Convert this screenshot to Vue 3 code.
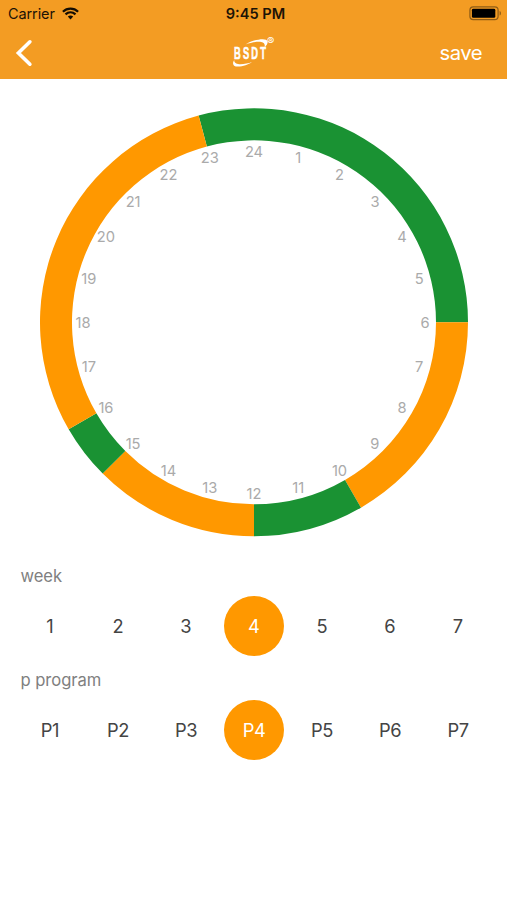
<template>
  <div class="screen">
    <header class="header">
      <div class="status-bar">
        <div class="carrier">
          <span class="carrier-name">Carrier</span>
          <svg class="wifi" width="17" height="13" viewBox="0 0 17 13">
            <path d="M0.9 4.7C5.2 0.5 11.8 0.5 16.1 4.7" />
            <path d="M3.5 7.4C6.4 4.7 10.6 4.7 13.5 7.4" />
            <path class="wifi-dot" d="M5.8 9.6C7.4 8.2 9.6 8.2 11.2 9.6L8.5 12.4Z" />
          </svg>
        </div>
        <span class="time">9:45 PM</span>
        <svg class="battery" width="33" height="15" viewBox="0 0 33 15">
          <rect class="battery-shell" x="0.9" y="0.9" width="28.2" height="12.8" rx="3.4" />
          <rect x="2.9" y="2.8" width="23.4" height="9" rx="1.4" />
          <path class="battery-cap" d="M30.6 5C32.4 5.7 32.4 8.9 30.6 9.6Z" />
        </svg>
      </div>
      <div class="nav-bar">
        <button class="back" aria-label="Back">
          <svg width="18" height="28" viewBox="0 0 18 28">
            <path d="M14.9 2.8L3.4 14L14.9 25.2" />
          </svg>
        </button>
        <svg class="logo" width="55" height="41" viewBox="-4 -4 55 41">
          <path d="M15.5 8.4C23 3.6 36.6 1 37.6 5.4C38 7.4 36.6 9.6 34.6 11.4C35.2 8.6 34.4 6.6 31.2 6C27.2 5.4 20.6 6.6 15.5 8.4Z" />
          <path d="M4.2 24C2.2 27 2.6 30.4 7.4 30.6C12.4 30.8 18.4 28.6 22 26C17.6 27.6 11.6 28.8 8 28C5.2 27.4 4 26.2 4.2 24Z" />
          <text class="logo-name" transform="translate(4 23.3) scale(0.55 1)">BSDT</text>
          <text class="logo-mark" x="37" y="9.4">®</text>
        </svg>
        <button class="save">save</button>
      </div>
    </header>

    <svg class="dial" width="428" height="429" viewBox="-214 -214.3 428 429">
      <path
        v-for="segment in segments"
        :key="segment.from"
        :class="segment.type"
        :d="arcPath(segment.from, segment.to)"
      />
      <text
        v-for="hour in hours"
        :key="hour.value"
        class="hour"
        :x="hour.x"
        :y="hour.y + 5.5"
      >{{ hour.value }}</text>
    </svg>

    <section class="picker">
      <h2 class="picker-title">week</h2>
      <div class="options">
        <button
          v-for="day in 7"
          :key="day"
          class="option"
          :class="{ active: day === selectedDay }"
          @click="selectedDay = day"
        >{{ day }}</button>
      </div>
    </section>

    <section class="picker">
      <h2 class="picker-title">p program</h2>
      <div class="options">
        <button
          v-for="program in 7"
          :key="program"
          class="option program"
          :class="{ active: program === selectedProgram }"
          @click="selectedProgram = program"
        >P{{ program }}</button>
      </div>
    </section>
  </div>
</template>

<script setup>
import { ref } from "vue";

const OUTER = 214;
const INNER = 182;
const LABELS = 171;

const selectedDay = ref(4);
const selectedProgram = ref(4);

const segments = ref([
  { from: -1, to: 6, type: "on" },
  { from: 6, to: 10, type: "off" },
  { from: 10, to: 12, type: "on" },
  { from: 12, to: 15, type: "off" },
  { from: 15, to: 16, type: "on" },
  { from: 16, to: 23, type: "off" },
]);

// 24 sits at the top of the dial, hours go clockwise
const point = (hour, radius) => {
  const angle = (hour / 24) * Math.PI * 2;
  return {
    x: Math.round(Math.sin(angle) * radius * 100) / 100,
    y: Math.round(-Math.cos(angle) * radius * 100) / 100,
  };
};

const arcPath = (from, to) => {
  const a = point(from, OUTER);
  const b = point(to, OUTER);
  const c = point(to, INNER);
  const d = point(from, INNER);
  return `M${a.x} ${a.y}A${OUTER} ${OUTER} 0 0 1 ${b.x} ${b.y}L${c.x} ${c.y}A${INNER} ${INNER} 0 0 0 ${d.x} ${d.y}Z`;
};

const hours = Array.from({ length: 24 }, (_, i) => ({
  value: i + 1,
  ...point(i + 1, LABELS),
}));
</script>

<style>
body {
  margin: 0;
  background: #fff;
}
</style>

<style scoped>
.screen {
  display: flex;
  flex-direction: column;
  width: 507px;
  height: 900px;
  overflow: hidden;
  background: #fff;
  font-family: Inter, "Liberation Sans", sans-serif;
}

button {
  margin: 0;
  padding: 0;
  border: 0;
  background: none;
  font-family: inherit;
  cursor: pointer;
}

.header {
  height: 79px;
  background: #f39c23;
}

.status-bar {
  display: grid;
  grid-template-columns: 1fr auto 1fr;
  align-items: center;
  height: 27px;
  padding: 0 5px 0 8px;
  color: #1c1306;
}

.carrier {
  display: flex;
  align-items: center;
  gap: 7px;
}

.carrier-name {
  font-size: 14.5px;
  letter-spacing: -0.1px;
}

.wifi {
  fill: none;
  stroke: #140d02;
  stroke-width: 2.2;
}

.wifi-dot {
  fill: #140d02;
  stroke: none;
}

.time {
  margin-left: 1px;
  font-size: 14.6px;
  font-weight: 600;
}

.battery {
  justify-self: end;
}

.battery-shell {
  fill: none;
  stroke: #8e5c16;
  stroke-width: 1.2;
}

.battery-cap {
  fill: #8e5c16;
}

.nav-bar {
  display: grid;
  grid-template-columns: 1fr auto 1fr;
  align-items: center;
  height: 51px;
}

.back {
  justify-self: start;
  height: 28px;
  margin-left: 15px;
}

.back path {
  fill: none;
  stroke: #fff;
  stroke-width: 3.6;
  stroke-linecap: round;
  stroke-linejoin: miter;
}

.logo {
  overflow: visible;
  fill: #fff;
}

.logo-name {
  font-family: "Liberation Sans", sans-serif;
  font-size: 17px;
  font-weight: 700;
  letter-spacing: 3.9px;
  stroke: #fff;
  stroke-width: 0.6;
}

.logo-mark {
  font-size: 11px;
}

.save {
  justify-self: end;
  margin-right: 25px;
  color: #fff;
  font-size: 20.3px;
  letter-spacing: -0.55px;
}

.dial {
  flex: none;
  margin: 29px 0 0 40px;
}

.on {
  fill: #1a9233;
}

.off {
  fill: #ff9800;
}

.hour {
  fill: #aaa;
  font-size: 14.7px;
  text-anchor: middle;
}

.picker-title {
  height: 20px;
  margin: 29px 0 0 20.5px;
  color: #808080;
  font-size: 16.6px;
  font-weight: 400;
  letter-spacing: -0.05px;
  line-height: 20px;
}

.options {
  display: grid;
  grid-template-columns: repeat(7, 68px);
  margin: 10px 0 0 16px;
  justify-items: center;
}

.option {
  width: 60px;
  height: 60px;
  border-radius: 50%;
  color: #444;
  font-size: 18.3px;
}

.option.program {
  letter-spacing: -0.4px;
}

.option.active {
  background: #ff9800;
  color: #fff;
}

.picker + .picker .picker-title {
  margin-top: 14px;
}
</style>
